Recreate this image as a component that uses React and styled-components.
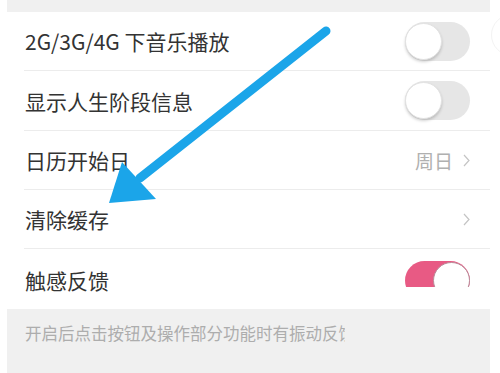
import React from "react";
import styled, { createGlobalStyle } from "styled-components";

const Global = createGlobalStyle`
  html, body { margin: 0; padding: 0; background: #fff; }
  body { font-family: "Noto Sans CJK SC", "Noto Sans", sans-serif; }
`;

const Page = styled.div`
  position: relative;
  width: 500px;
  height: 373px;
  overflow: hidden;
  background: #fff;
  padding: 0 10px 0 7px;
  box-sizing: border-box;
`;

const Screen = styled.div`
  display: flex;
  flex-direction: column;
  height: 100%;
`;

const TopBand = styled.div`
  height: 12px;
  background: #f0f0f0;
  flex-shrink: 0;
`;

const List = styled.div`
  display: flex;
  flex-direction: column;
  background: #fff;
`;

const Row = styled.div`
  height: ${(p) => p.$h || 59}px;
  margin-left: 17px;
  padding-right: 20px;
  display: flex;
  align-items: ${(p) => (p.$top ? "flex-start" : "center")};
  justify-content: space-between;
  border-bottom: ${(p) => (p.$last ? "none" : "1px solid #ececec")};
  box-sizing: border-box;
  ${(p) => (p.$top ? "padding-top: 12px;" : "")}
`;

const Label = styled.span`
  font-size: 21px;
  color: #333;
  padding-left: 1px;
  ${(p) => (p.$top ? "margin-top: 4px;" : "")}
`;

const Right = styled.div`
  display: flex;
  align-items: center;
  gap: 10px;
  color: #b0b0b0;
  font-size: 19px;
`;

const Chevron = styled.svg`
  width: 7px;
  height: 13px;
  margin-top: 1px;
`;

const Track = styled.div`
  position: relative;
  width: 65px;
  height: 39px;
  border-radius: 20px;
  background: ${(p) => (p.$on ? "#e85a84" : "#e6e6e6")};
  flex-shrink: 0;
`;

const Clip = styled.div`
  height: 26px;
  overflow: hidden;
  align-self: flex-start;
`;

const Knob = styled.div`
  position: absolute;
  top: 1px;
  ${(p) => (p.$on ? "right: 0;" : "left: 0;")}
  width: 37px;
  height: 37px;
  border-radius: 50%;
  background: #fff;
  box-sizing: border-box;
  border: 1px solid ${(p) => (p.$on ? "#b98a98" : "#e2e2e2")};
  box-shadow: ${(p) => (p.$on ? "none" : "0 2px 3px rgba(0,0,0,0.18)")};
`;

const Footer = styled.div`
  flex: 1;
  background: #f0f0f0;
  padding: 12px 0 0 18px;
`;

const FooterText = styled.div`
  width: 320px;
  overflow: hidden;
  white-space: nowrap;
  font-size: 16.5px;
  color: #adadad;
`;

const Overlay = styled.svg`
  position: absolute;
  left: 0;
  top: 0;
  pointer-events: none;
`;

const Ghost = styled.div`
  position: absolute;
  left: 491px;
  top: 14px;
  width: 40px;
  height: 40px;
  border-radius: 50%;
  border: 1px solid #f3f3f3;
`;

const Toggle = ({ on }) => (
  <Track $on={on}>
    <Knob $on={on} />
  </Track>
);

const ChevronIcon = () => (
  <Chevron viewBox="0 0 7 13">
    <path d="M1 1 L6 6.5 L1 12" fill="none" stroke="#c4c4c4" strokeWidth="1.2" />
  </Chevron>
);

export default function App() {
  return (
    <>
      <Global />
      <Page>
        <Screen>
          <TopBand />
          <List>
            <Row>
              <Label>2G/3G/4G 下音乐播放</Label>
              <Toggle />
            </Row>
            <Row $h={60}>
              <Label>显示人生阶段信息</Label>
              <Toggle />
            </Row>
            <Row>
              <Label>日历开始日</Label>
              <Right>
                周日
                <ChevronIcon />
              </Right>
            </Row>
            <Row>
              <Label>清除缓存</Label>
              <Right>
                <ChevronIcon />
              </Right>
            </Row>
            <Row $h={60} $last $top>
              <Label $top>触感反馈</Label>
              <Clip>
                <Toggle on />
              </Clip>
            </Row>
          </List>
          <Footer>
            <FooterText>开启后点击按钮及操作部分功能时有振动反馈</FooterText>
          </Footer>
        </Screen>
        <Ghost />
        <Overlay width="500" height="373" viewBox="0 0 500 373">
          <line x1="326" y1="31" x2="140" y2="178" stroke="#1ba5e9" strokeWidth="9" strokeLinecap="round" />
          <polygon points="109,203 122,162 156,199" fill="#1ba5e9" />
        </Overlay>
      </Page>
    </>
  );
}
